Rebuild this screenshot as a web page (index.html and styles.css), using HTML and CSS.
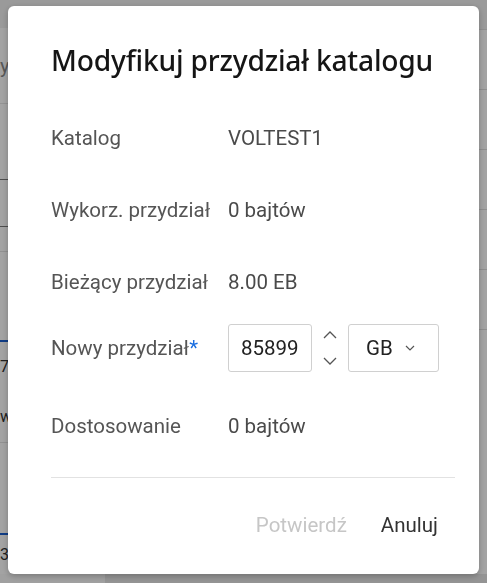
FILE: index.html
```html
<!DOCTYPE html>
<html lang="pl">
<head>
<meta charset="utf-8">
<title>Modyfikuj przydział katalogu</title>
<link rel="stylesheet" href="styles.css">
</head>
<body>
<div class="page">
  <div class="side">
    <div class="side-head"></div>
    <div class="side-row side-title">y</div>
    <div class="side-row h76 line-dark"></div>
    <div class="side-row h47 line-dark"></div>
    <div class="side-row h25 line-light"></div>
    <div class="side-row h90 line-blue"></div>
    <div class="side-row h48 side-txt">7</div>
    <div class="side-row h53 side-txt line-light">w</div>
    <div class="side-row h92 line-blue"></div>
    <div class="side-row h39 side-txt">3</div>
    <div class="side-foot"></div>
  </div>
  <div class="main">
    <div class="main-row first"></div>
    <div class="main-row"></div>
    <div class="main-row"></div>
    <div class="main-row"></div>
    <div class="main-row"></div>
    <div class="main-row"></div>
    <div class="main-rest"></div>
    <div class="main-foot"></div>
  </div>
</div>

<div class="scrim">
  <div class="dialog" role="dialog" aria-labelledby="dlg-title">
    <h1 class="dialog-title" id="dlg-title">Modyfikuj przydział katalogu</h1>
    <div class="fields">
      <div class="row">
        <div class="label">Katalog</div>
        <div class="value">VOLTEST1</div>
      </div>
      <div class="row">
        <div class="label">Wykorz. przydział</div>
        <div class="value">0 bajtów</div>
      </div>
      <div class="row">
        <div class="label">Bieżący przydział</div>
        <div class="value">8.00 EB</div>
      </div>
      <div class="row row-input">
        <div class="label">Nowy przydział<span class="req">*</span></div>
        <div class="controls">
          <div class="num-input">85899</div>
          <div class="spinner">
            <svg width="14" height="8" viewBox="0 0 14 8"><path d="M1 7 L7 1 L13 7" fill="none" stroke="#555" stroke-width="1.3"/></svg>
            <svg width="14" height="8" viewBox="0 0 14 8"><path d="M1 1 L7 7 L13 1" fill="none" stroke="#555" stroke-width="1.3"/></svg>
          </div>
          <div class="select">
            <span>GB</span>
            <svg width="10" height="6" viewBox="0 0 10 6"><path d="M1 1 L5 5 L9 1" fill="none" stroke="#555" stroke-width="1.2"/></svg>
          </div>
        </div>
      </div>
      <div class="row">
        <div class="label">Dostosowanie</div>
        <div class="value">0 bajtów</div>
      </div>
    </div>
    <div class="divider"></div>
    <div class="footer">
      <button class="btn btn-disabled" disabled>Potwierdź</button>
      <button class="btn">Anuluj</button>
    </div>
  </div>
</div>
</body>
</html>
```

FILE: styles.css
```css
html, body {
  margin: 0;
  padding: 0;
  height: 100%;
}
body {
  font-family: Roboto, "Liberation Sans", sans-serif;
  background: #ffffff;
  overflow: hidden;
}

/* underlying page */
.page {
  display: flex;
  height: 583px;
}
.side {
  width: 105px;
  display: flex;
  flex-direction: column;
  color: #333;
  font-size: 16px;
}
.side-head {
  height: 28px;
  background: #f1f1f1;
  flex: none;
}
.side-row {
  flex: none;
  box-sizing: border-box;
  display: flex;
  align-items: center;
  overflow: hidden;
}
.side-title {
  height: 76px;
  color: #8a8a8a;
  font-size: 20px;
  border-bottom: 1px solid #e6e6e6;
}
.h76 { height: 76px; }
.h47 { height: 47px; }
.h25 { height: 25px; }
.h90 { height: 90px; }
.h48 { height: 48px; }
.h53 { height: 53px; }
.h92 { height: 92px; }
.h39 { height: 39px; }
.line-dark { border-bottom: 1px solid #7a7a7a; }
.line-light { border-bottom: 1px solid #e3e3e3; }
.line-blue { border-bottom: 2px solid #1a5fd0; }
.side-foot {
  flex: 1;
  background: #fafafa;
}
.main {
  flex: 1;
  display: flex;
  flex-direction: column;
}
.main-row {
  height: 60px;
  flex: none;
  border-bottom: 1px solid #e0e0e0;
  box-sizing: border-box;
}
.main-row.first { height: 30px; background: #f1f1f1; }
.main-rest { flex: 1; }
.main-foot {
  height: 9px;
  flex: none;
  background: #e8e8e8;
}

/* overlay */
.scrim {
  position: fixed;
  inset: 0;
  background: rgba(0, 0, 0, 0.36);
  display: flex;
  justify-content: center;
  align-items: flex-start;
}
.dialog {
  margin-top: 6px;
  width: 471px;
  height: 568px;
  box-sizing: border-box;
  background: #ffffff;
  border-radius: 6px;
  box-shadow: 0 2px 6px rgba(0, 0, 0, 0.25);
  padding: 36px 24px 0 43px;
  display: flex;
  flex-direction: column;
}
.dialog-title {
  margin: 0;
  font-family: "Noto Sans", "Open Sans", sans-serif;
  font-weight: 500;
  font-size: 28.2px;
  line-height: 36px;
  color: #151515;
  letter-spacing: -0.2px;
  white-space: nowrap;
}
.fields {
  display: flex;
  flex-direction: column;
  margin-top: 24px;
}
.row {
  display: flex;
  align-items: center;
  padding: 24px 0;
  font-size: 20.5px;
  line-height: 24px;
}
.label {
  width: 177px;
  flex: none;
  color: #555555;
  white-space: nowrap;
}
.value {
  color: #4a4a4a;
}
.req {
  color: #1a6ee0;
}
.row-input {
  padding: 6px 0 18px;
}
.controls {
  display: flex;
  align-items: center;
}
.num-input {
  width: 84px;
  height: 48px;
  box-sizing: border-box;
  border: 1px solid #d0d0d0;
  border-radius: 3px;
  padding-left: 12px;
  display: flex;
  align-items: center;
  color: #222;
  font-size: 20.5px;
}
.spinner {
  width: 36px;
  height: 48px;
  display: flex;
  flex-direction: column;
  align-items: center;
  justify-content: center;
  gap: 18px;
}
.select {
  width: 91px;
  height: 48px;
  box-sizing: border-box;
  border: 1px solid #d0d0d0;
  border-radius: 3px;
  padding-left: 17px;
  display: flex;
  align-items: center;
  gap: 12px;
  color: #222;
  font-size: 20.5px;
}
.divider {
  margin-top: 15px;
  height: 1px;
  background: #e2e2e2;
}
.footer {
  display: flex;
  justify-content: flex-end;
  padding: 29px 17px 0 0;
  gap: 34px;
}
.btn {
  border: none;
  background: none;
  padding: 0;
  height: 36px;
  font-family: Roboto, "Liberation Sans", sans-serif;
  font-size: 20.5px;
  color: #333333;
  cursor: pointer;
}
.btn-disabled {
  color: #c6c6c6;
  cursor: default;
}
```
